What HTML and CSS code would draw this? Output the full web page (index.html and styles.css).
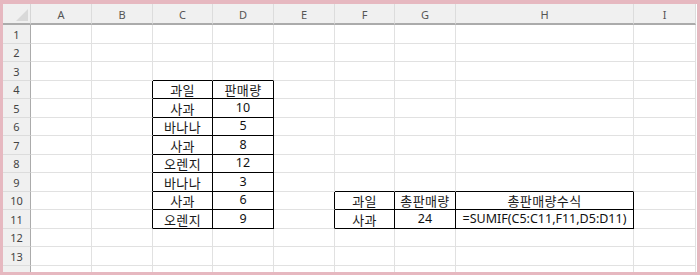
FILE: index.html
```html
<!DOCTYPE html>
<html lang="ko">
<head>
<meta charset="utf-8">
<link rel="stylesheet" href="styles.css">
</head>
<body>
<div class="frame">
  <div class="sheet">
    <div class="corner"><span class="tri"></span></div>
    <div class="ch">A</div><div class="ch">B</div><div class="ch">C</div><div class="ch">D</div><div class="ch">E</div><div class="ch">F</div><div class="ch">G</div><div class="ch">H</div><div class="ch last">I</div>

    <div class="rh">1</div><div class="c"></div><div class="c"></div><div class="c"></div><div class="c"></div><div class="c"></div><div class="c"></div><div class="c"></div><div class="c"></div><div class="c"></div>
    <div class="rh">2</div><div class="c"></div><div class="c"></div><div class="c"></div><div class="c"></div><div class="c"></div><div class="c"></div><div class="c"></div><div class="c"></div><div class="c"></div>
    <div class="rh">3</div><div class="c"></div><div class="c"></div><div class="c bb"></div><div class="c bb"></div><div class="c"></div><div class="c"></div><div class="c"></div><div class="c"></div><div class="c"></div>
    <div class="rh">4</div><div class="c"></div><div class="c br"></div><div class="c bb br"><span class="ko">과일</span></div><div class="c bb br"><span class="ko">판매량</span></div><div class="c"></div><div class="c"></div><div class="c"></div><div class="c"></div><div class="c"></div>
    <div class="rh">5</div><div class="c"></div><div class="c br"></div><div class="c bb br"><span class="ko">사과</span></div><div class="c bb br">10</div><div class="c"></div><div class="c"></div><div class="c"></div><div class="c"></div><div class="c"></div>
    <div class="rh">6</div><div class="c"></div><div class="c br"></div><div class="c bb br"><span class="ko">바나나</span></div><div class="c bb br">5</div><div class="c"></div><div class="c"></div><div class="c"></div><div class="c"></div><div class="c"></div>
    <div class="rh">7</div><div class="c"></div><div class="c br"></div><div class="c bb br"><span class="ko">사과</span></div><div class="c bb br">8</div><div class="c"></div><div class="c"></div><div class="c"></div><div class="c"></div><div class="c"></div>
    <div class="rh">8</div><div class="c"></div><div class="c br"></div><div class="c bb br"><span class="ko">오렌지</span></div><div class="c bb br">12</div><div class="c"></div><div class="c"></div><div class="c"></div><div class="c"></div><div class="c"></div>
    <div class="rh">9</div><div class="c"></div><div class="c br"></div><div class="c bb br"><span class="ko">바나나</span></div><div class="c bb br">3</div><div class="c"></div><div class="c bb"></div><div class="c bb"></div><div class="c bb"></div><div class="c"></div>
    <div class="rh">10</div><div class="c"></div><div class="c br"></div><div class="c bb br"><span class="ko">사과</span></div><div class="c bb br">6</div><div class="c br"></div><div class="c bb br"><span class="ko">과일</span></div><div class="c bb br"><span class="ko">총판매량</span></div><div class="c bb br"><span class="ko">총판매량수식</span></div><div class="c"></div>
    <div class="rh">11</div><div class="c"></div><div class="c br"></div><div class="c bb br"><span class="ko">오렌지</span></div><div class="c bb br">9</div><div class="c br"></div><div class="c bb br"><span class="ko">사과</span></div><div class="c bb br">24</div><div class="c bb br">=SUMIF(C5:C11,F11,D5:D11)</div><div class="c"></div>
    <div class="rh">12</div><div class="c"></div><div class="c"></div><div class="c"></div><div class="c"></div><div class="c"></div><div class="c"></div><div class="c"></div><div class="c"></div><div class="c"></div>
    <div class="rh">13</div><div class="c"></div><div class="c"></div><div class="c"></div><div class="c"></div><div class="c"></div><div class="c"></div><div class="c"></div><div class="c"></div><div class="c"></div>
    <div class="rh tail"></div><div class="c tail"></div><div class="c tail"></div><div class="c tail"></div><div class="c tail"></div><div class="c tail"></div><div class="c tail"></div><div class="c tail"></div><div class="c tail"></div><div class="c tail"></div>
  </div>
</div>
</body>
</html>
```

FILE: styles.css
```css
* { box-sizing: border-box; }
html, body { margin: 0; padding: 0; background: #fff; }
body { width: 700px; height: 275px; overflow: hidden; }

.frame {
  width: 700px;
  height: 275px;
  border-style: solid;
  border-color: #e6b8c0;
  border-width: 4px 3px 3px 3px;
  background: #fff;
}

.sheet {
  display: grid;
  grid-template-columns: 28px 61px 61px 60px 61px 61px 60px 61px 178px 62px;
  grid-template-rows: 21px 19px 18px 19px 18px 19px 18px 19px 18px 19px 18px 19px 18px 19px 6px;
  font-family: "Noto Sans", "Noto Sans CJK KR", sans-serif;
}

.corner {
  background: #f0f0f0;
  border-right: 1px solid #d6d6d6;
  border-bottom: 2px solid #ababab;
  display: flex;
  align-items: flex-end;
  justify-content: flex-end;
  padding: 0 2px 2px 0;
}
.tri {
  width: 12px;
  height: 12px;
  background: #d9d9d9;
  clip-path: polygon(100% 0, 100% 100%, 0 100%);
}

.ch {
  background: #f0f0f0;
  border-right: 1px solid #dcdcdc;
  border-bottom: 2px solid #ababab;
  display: flex;
  align-items: center;
  justify-content: center;
  font-size: 11px;
  color: #555;
  padding-top: 1px;
}

.rh {
  background: #f0f0f0;
  border-right: 1px solid #ababab;
  border-bottom: 1px solid #dcdcdc;
  display: flex;
  align-items: center;
  justify-content: center;
  font-size: 11px;
  color: #444;
}

.c {
  border-right: 1px solid #e1e1e1;
  border-bottom: 1px solid #e1e1e1;
  display: flex;
  align-items: center;
  justify-content: center;
  font-size: 12.5px;
  color: #111;
  white-space: nowrap;
  line-height: 1;
}

.ko {
  font-family: "Noto Sans CJK KR", sans-serif;
  font-size: 13px;
  letter-spacing: 0.4px;
  color: #1a1a1a;
}

.c.bb { border-bottom-color: #000; }
.c.br { border-right-color: #000; }

.tail { border-bottom: none; }
```
